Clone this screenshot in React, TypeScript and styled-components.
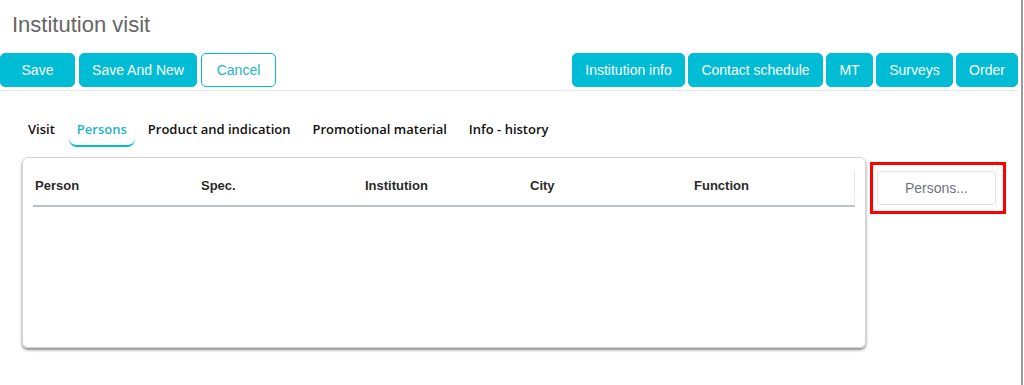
import React from "react";
import styled, { createGlobalStyle } from "styled-components";

const Global = createGlobalStyle`
  html, body { margin: 0; padding: 0; background: #fff; }
  body { font-family: "Liberation Sans", Arial, sans-serif; }
  * { box-sizing: border-box; }
`;

const Page = styled.div`
  width: 1024px;
  height: 385px;
  position: relative;
  overflow: hidden;
`;

const ScrollEdge = styled.div`
  position: absolute;
  top: 0;
  right: 1px;
  width: 2px;
  height: 100%;
  background: #9a9a9a;
`;

const Main = styled.div`
  width: 1018px;
`;

const Title = styled.h1`
  margin: 0;
  padding: 12px 0 0 12px;
  height: 53px;
  font-family: "Liberation Sans", Arial, sans-serif;
  font-weight: 400;
  font-size: 22px;
  line-height: 26px;
  color: #666;
`;

const Toolbar = styled.div`
  display: flex;
  justify-content: space-between;
  padding-bottom: 3px;
  border-bottom: 1px solid #e6e6e6;
`;

const Group = styled.div<{ gap: number }>`
  display: flex;
  gap: ${(p) => p.gap}px;
`;

const Btn = styled.button<{ w: number; outline?: boolean }>`
  width: ${(p) => p.w}px;
  height: 34px;
  border-radius: 5px;
  border: 1px solid #00bcd4;
  background: ${(p) => (p.outline ? "#fff" : "#00bcd4")};
  color: ${(p) => (p.outline ? "#26b3cc" : "#fff")};
  font-family: "Liberation Sans", Arial, sans-serif;
  font-size: 14px;
  padding: 0;
  cursor: pointer;
`;

const Tabs = styled.div`
  display: flex;
  margin: 26px 0 0 20px;
  height: 30px;
`;

const Tab = styled.div<{ active?: boolean; mr: number }>`
  position: relative;
  padding: 3px 8px 0 8px;
  margin-right: ${(p) => p.mr}px;
  font-family: "Open Sans", sans-serif;
  font-weight: 600;
  font-size: 13px;
  line-height: 18px;
  color: ${(p) => (p.active ? "#1ab4cd" : "#111")};
  ${(p) =>
    p.active &&
    `
    &::after {
      content: "";
      position: absolute;
      left: 0;
      right: 0;
      bottom: 0;
      height: 6px;
      border-bottom: 2px solid #00bcd4;
      border-radius: 0 0 8px 8px;
    }
  `}
`;

const Content = styled.div`
  display: flex;
  align-items: flex-start;
  margin-top: 10px;
  padding-left: 22px;
`;

const Card = styled.div`
  width: 844px;
  height: 191px;
  border: 1px solid #d4d4d4;
  border-radius: 6px;
  box-shadow: 0 2px 3px rgba(0, 0, 0, 0.45);
  padding: 12px 10px 0 10px;
`;

const HeadRow = styled.div`
  display: grid;
  grid-template-columns: 166px 164px 165px 164px 1fr;
  height: 37px;
  border-bottom: 2px solid #b9c3cc;
  border-right: 1px solid #e8e8e8;
  align-items: center;
  padding-left: 2px;
  padding-bottom: 4px;
`;

const HeadCell = styled.div`
  font-family: "Liberation Sans", Arial, sans-serif;
  font-weight: 700;
  font-size: 13px;
  color: #2b2b2b;
`;

const Side = styled.div`
  margin: 5px 0 0 4px;
  border: 3px solid #f00;
  padding: 6px 7px 6px 4px;
  width: 136px;
`;

const GhostBtn = styled.button`
  width: 119px;
  height: 34px;
  border: 1px solid #e2e4e6;
  border-radius: 3px;
  background: #fff;
  color: #6f757c;
  font-family: "Liberation Sans", Arial, sans-serif;
  font-size: 14px;
  padding: 0;
`;

export default function App() {
  return (
    <Page>
      <Global />
      <Main>
        <Title>Institution visit</Title>
        <Toolbar>
          <Group gap={4}>
            <Btn w={75}>Save</Btn>
            <Btn w={118}>Save And New</Btn>
            <Btn w={75} outline>
              Cancel
            </Btn>
          </Group>
          <Group gap={3}>
            <Btn w={113}>Institution info</Btn>
            <Btn w={135}>Contact schedule</Btn>
            <Btn w={47}>MT</Btn>
            <Btn w={77}>Surveys</Btn>
            <Btn w={62}>Order</Btn>
          </Group>
        </Toolbar>
        <Tabs>
          <Tab mr={6}>Visit</Tab>
          <Tab mr={5} active>
            Persons
          </Tab>
          <Tab mr={6}>Product and indication</Tab>
          <Tab mr={6}>Promotional material</Tab>
          <Tab mr={0}>Info - history</Tab>
        </Tabs>
        <Content>
          <Card>
            <HeadRow>
              <HeadCell>Person</HeadCell>
              <HeadCell>Spec.</HeadCell>
              <HeadCell>Institution</HeadCell>
              <HeadCell>City</HeadCell>
              <HeadCell>Function</HeadCell>
            </HeadRow>
          </Card>
          <Side>
            <GhostBtn>Persons...</GhostBtn>
          </Side>
        </Content>
      </Main>
      <ScrollEdge />
    </Page>
  );
}
